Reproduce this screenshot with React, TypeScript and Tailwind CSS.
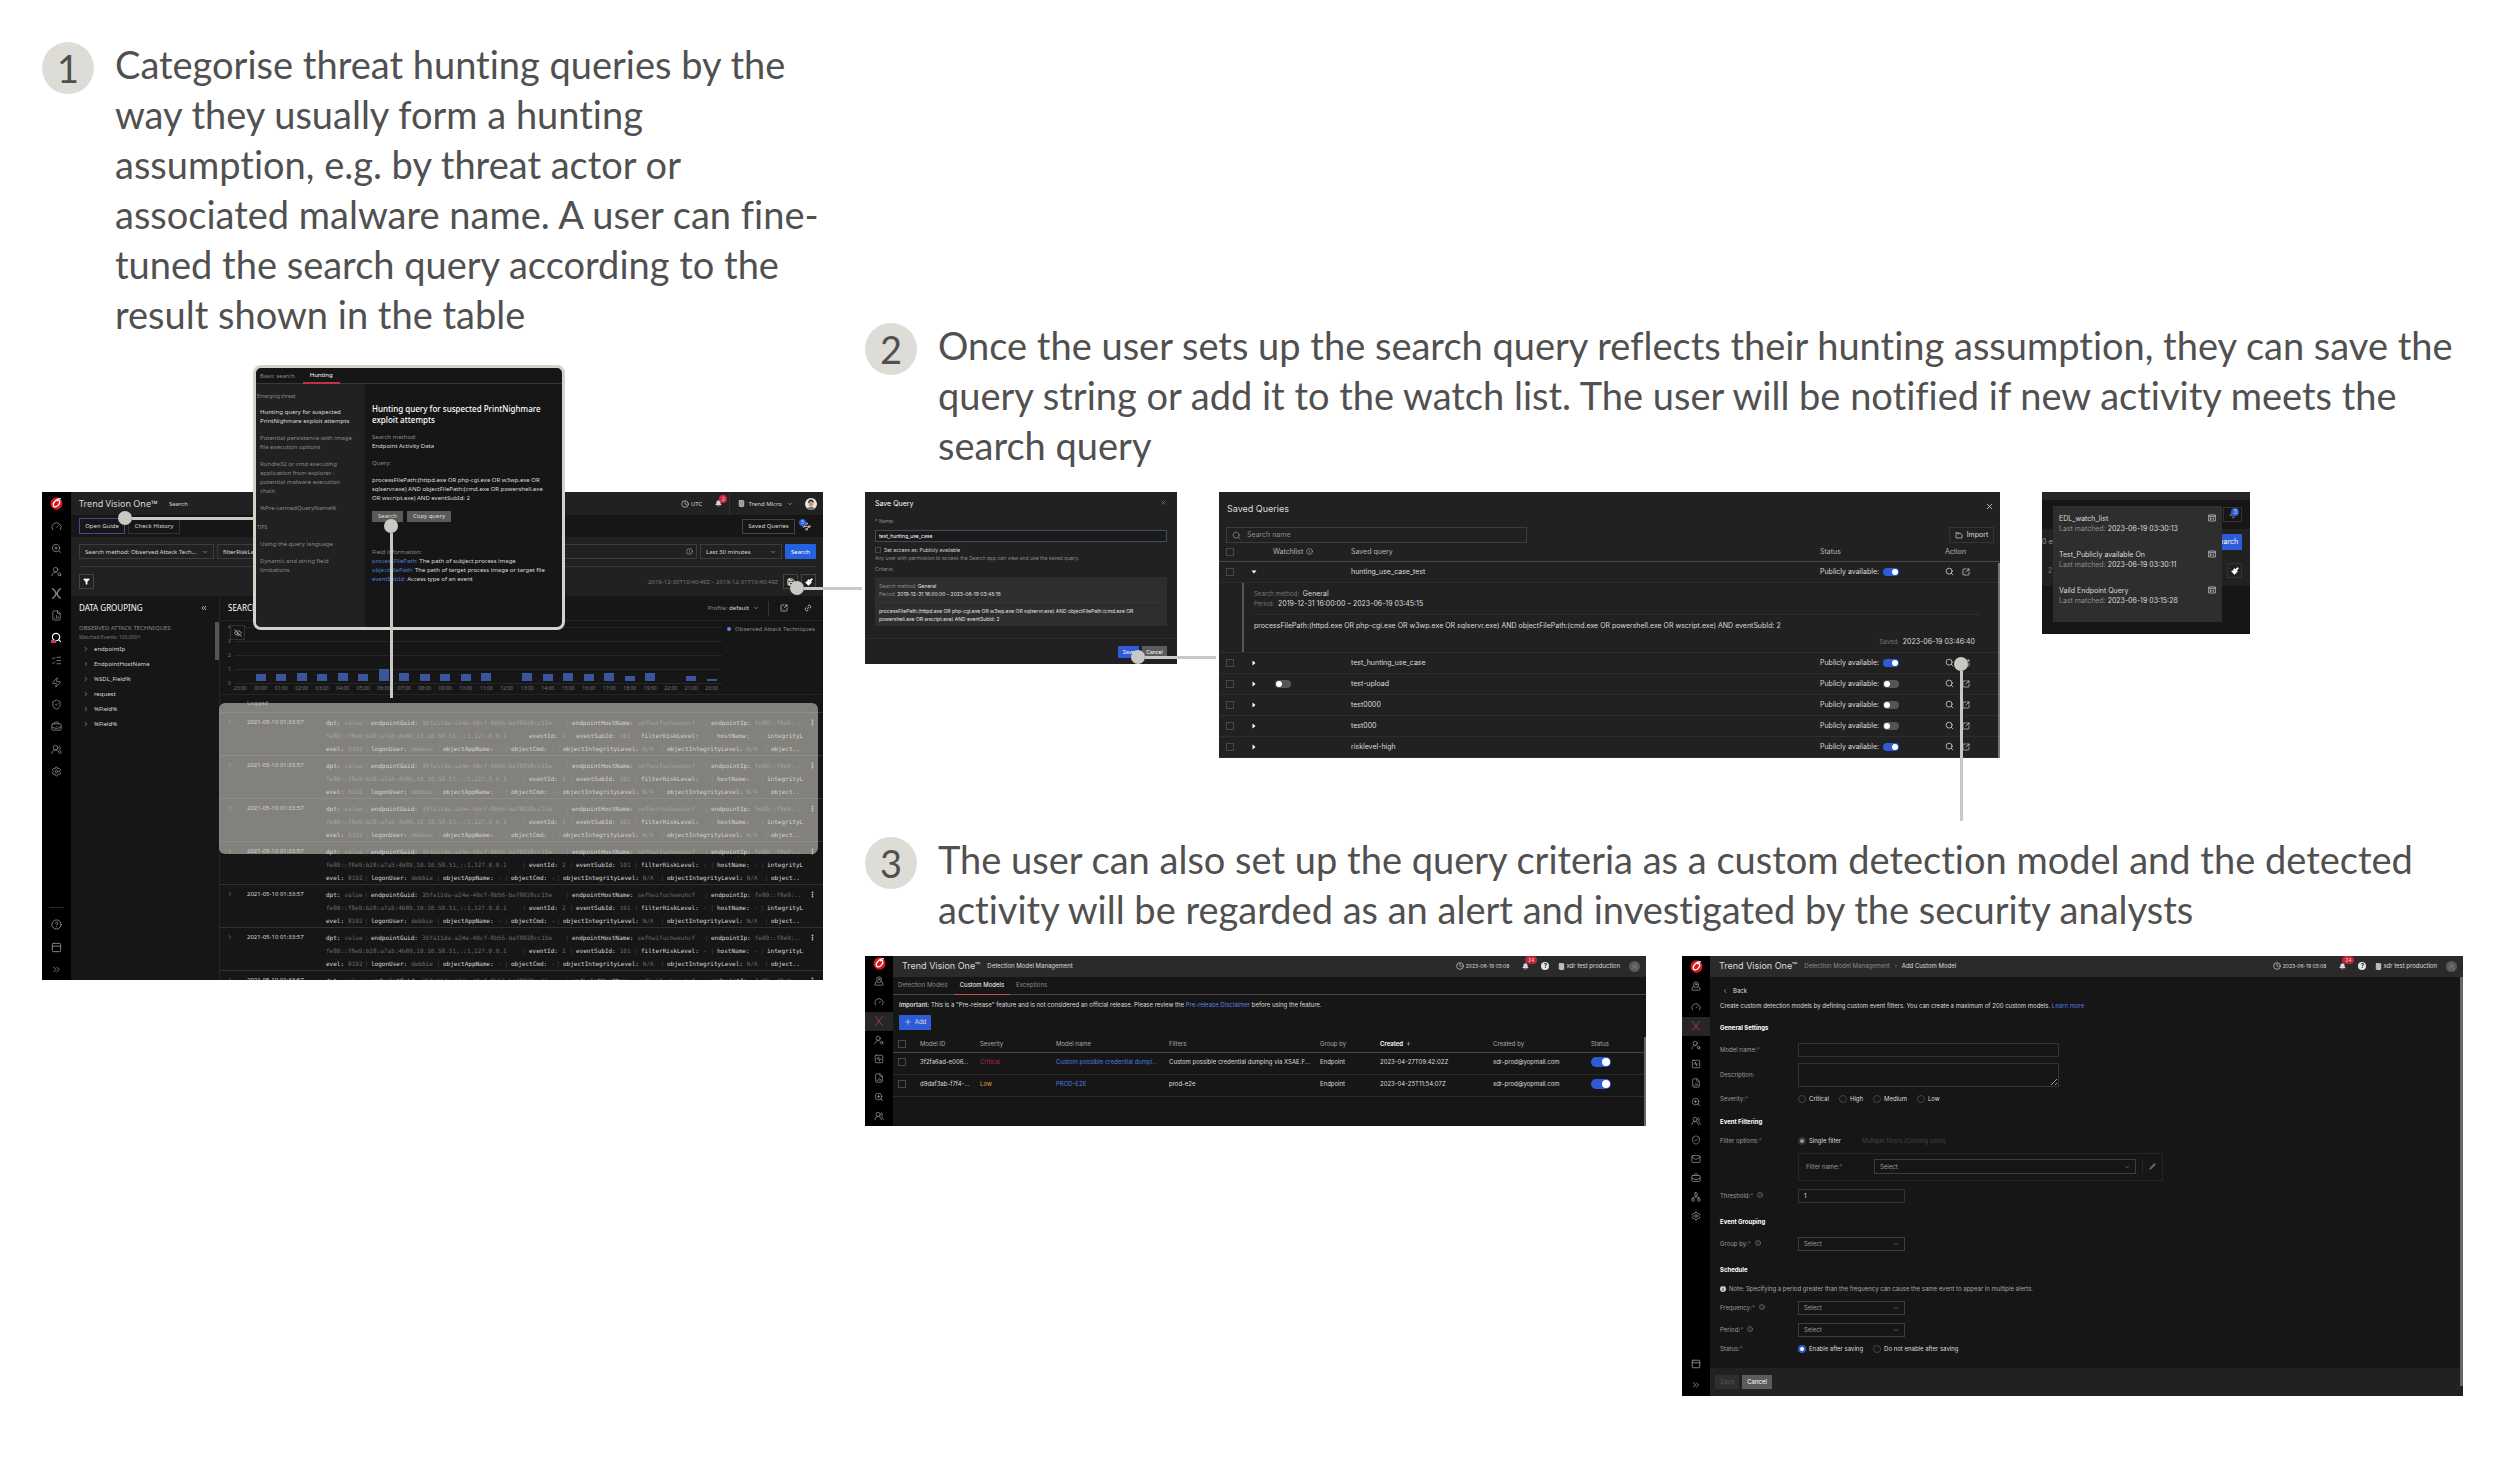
import type { ReactNode } from "react";
import {
  Activity,
  ArrowDown,
  Bell,
  BriefcaseBusiness,
  Building,
  ChevronDown,
  ChevronLeft,
  ChevronRight,
  ChevronsLeft,
  ChevronsRight,
  CircleHelp,
  Clock,
  EllipsisVertical,
  EyeOff,
  FileChartColumn,
  Funnel,
  Gauge,
  Info,
  Link2,
  ListChecks,
  Mail,
  MapPinned,
  Network,
  PanelTop,
  Paintbrush,
  Pencil,
  Plus,
  Save,
  Search,
  Settings,
  ShieldCheck,
  SquareArrowOutUpRight,
  SquareActivity,
  UserRound,
  UserRoundSearch,
  UsersRound,
  Waypoints,
  X,
  Zap,
  ZoomIn,
} from "lucide-react";

const noto = "font-['Noto_Sans',sans-serif]";
const inter = "font-[Inter,sans-serif]";

function Logo() {
  return (
    <svg viewBox="0 0 24 24" className="size-[13px]" aria-label="Trend Micro">
      <ellipse cx="12" cy="12" rx="11" ry="11.5" fill="#d71920" />
      <path
        d="M19 3C13 3 5.500 9 6 15c.3 3.500 4 4 7 2 3.500-2.300 5.500-6.500 4.500-9.500-.6-1.800-2.600-1.600-4-.6"
        fill="none"
        stroke="#fff"
        strokeWidth="2.400"
        strokeLinecap="round"
      />
    </svg>
  );
}

/* XDR mark, two chevrons that meet in the middle */
function Xdr({ className, strokeWidth = 2 }: { className?: string; strokeWidth?: number }) {
  return (
    <svg
      viewBox="0 0 24 24"
      className={className}
      fill="none"
      stroke="currentColor"
      strokeWidth={strokeWidth}
      strokeLinecap="round"
    >
      <path d="M3 2c3 0 4 2 5.500 4.500L11 12l-2.500 5.500C7 20 6 22 3 22M21 2c-3 0-4 2-5.500 4.500L13 12l2.500 5.500C17 20 18 22 21 22" />
    </svg>
  );
}

/* Tray with an arrow that bends into it */
function ImportIcon() {
  return (
    <svg viewBox="0 0 24 24" className="size-[8px]" fill="none" stroke="currentColor" strokeWidth="2">
      <path d="M6 4H3v17h18V10M8 7h7c3 0 4 2 4 4M11 3L7 7l4 4" />
    </svg>
  );
}

/* Numbered step heading */
function Step({ number, children }: { number: number; children: ReactNode }) {
  return (
    <div className="flex items-start gap-[21px] font-[Lato,sans-serif] text-[#505050] [font-variant-ligatures:none]">
      <span className="mt-[3px] flex size-[52px] shrink-0 items-center justify-center rounded-full bg-[#dddcd7] text-[38px] leading-[52px]">
        {number}
      </span>
      <p className="text-[38px] leading-[50px]">{children}</p>
    </div>
  );
}

function Dot() {
  return <span className="size-[14px] shrink-0 rounded-full bg-[#c9c8c2]" />;
}

function Switch({ on, label, large }: { on?: boolean; label: string; large?: boolean }) {
  return (
    <input
      type="checkbox"
      role="switch"
      aria-label={label}
      defaultChecked={on}
      className={
        large
          ? "relative h-[10px] w-[20px] shrink-0 appearance-none rounded-full bg-[#555] align-middle before:absolute before:top-px before:left-px before:size-[8px] before:rounded-full before:bg-white checked:bg-[#2f5bd7] checked:before:left-[11px]"
          : "relative h-[8px] w-[16px] shrink-0 appearance-none rounded-full bg-[#555] align-middle before:absolute before:top-px before:left-px before:size-[6px] before:rounded-full before:bg-white checked:bg-[#2f5bd7] checked:before:left-[9px]"
      }
    />
  );
}

function Check({ label }: { label: string }) {
  return (
    <input
      type="checkbox"
      aria-label={label}
      className="block size-[8px] shrink-0 appearance-none border border-[#484848]"
    />
  );
}

function Dropdown({ label, value, className }: { label: string; value: string; className: string }) {
  return (
    <div className={`relative ${className}`}>
      <select
        aria-label={label}
        className="block h-full w-full appearance-none border border-[#3d3d3d] bg-transparent px-[5px] text-inherit"
      >
        <option>{value}</option>
      </select>
      <ChevronDown className="absolute top-1/2 right-[6px] size-[6px] -translate-y-1/2" />
    </div>
  );
}

const mainRail = [
  Gauge,
  ZoomIn,
  UserRoundSearch,
  Xdr,
  FileChartColumn,
  Activity,
  ListChecks,
  Zap,
  ShieldCheck,
  BriefcaseBusiness,
  UsersRound,
  Settings,
];

const modelRail = [
  MapPinned,
  Gauge,
  Xdr,
  UserRoundSearch,
  SquareActivity,
  FileChartColumn,
  ZoomIn,
  UsersRound,
  ShieldCheck,
  Mail,
  BriefcaseBusiness,
  Network,
  Settings,
];

const groups = ["endpointIp", "EndpointHostName", "%SDL_Field%", "request", "%Field%", "%Field%"];

const bars = [
  { hour: "23:00", size: 0 },
  { hour: "00:00", size: 7 },
  { hour: "01:00", size: 7 },
  { hour: "02:00", size: 8 },
  { hour: "03:00", size: 7 },
  { hour: "04:00", size: 8 },
  { hour: "05:00", size: 7 },
  { hour: "06:00", size: 12 },
  { hour: "07:00", size: 8 },
  { hour: "08:00", size: 7 },
  { hour: "09:00", size: 7 },
  { hour: "10:00", size: 7 },
  { hour: "11:00", size: 8 },
  { hour: "12:00", size: 0 },
  { hour: "13:00", size: 8 },
  { hour: "14:00", size: 7 },
  { hour: "15:00", size: 8 },
  { hour: "16:00", size: 7 },
  { hour: "17:00", size: 8 },
  { hour: "18:00", size: 5 },
  { hour: "19:00", size: 8 },
  { hour: "22:00", size: 0 },
  { hour: "21:00", size: 5 },
  { hour: "20:00", size: 2 },
];

const eventLines = [
  [
    { name: "dpt:", value: "value", width: "w-[45px]" },
    { name: "endpointGuid:", value: "35fa11da-a24e-40cf-8b56-baf8828cc15e", width: "w-[201px]" },
    { name: "endpointHostName:", value: "sefhwifuchweuhcf", width: "w-[139px]" },
    { name: "endpointIp:", value: "fe80::f8e9:..", width: "w-[92px]" },
  ],
  [
    { name: "", value: "fe80::f8e9:b28:a7a5:4b89,10.10.58.51,::1,127.0.0.1", width: "w-[203px]" },
    { name: "eventId:", value: "2", width: "w-[47px]" },
    { name: "eventSubId:", value: "101", width: "w-[65px]" },
    { name: "filterRiskLevel:", value: "-", width: "w-[76px]" },
    { name: "hostName:", value: "-", width: "w-[50px]" },
    { name: "integrityL", value: "", width: "w-[38px]" },
  ],
  [
    { name: "evel:", value: "8192", width: "w-[45px]" },
    { name: "logonUser:", value: "debbie", width: "w-[72px]" },
    { name: "objectAppName:", value: "-", width: "w-[68px]" },
    { name: "objectCmd:", value: "-", width: "w-[52px]" },
    { name: "objectIntegrityLevel:", value: "N/A", width: "w-[104px]" },
    { name: "objectIntegrityLevel:", value: "N/A", width: "w-[104px]" },
    { name: "object..", value: "", width: "w-[32px]" },
  ],
];

function EventRow() {
  return (
    <tr className="border-t border-[#303030] align-top">
      <td className="w-[27px] pt-[6px] pl-[7px]">
        <ChevronRight className="size-[6px] text-[#aaa]" />
      </td>
      <td className="w-[79px] pt-[3px] leading-[13px]">2021-05-10 01:33:57</td>
      <td className="pt-[3px] font-['DejaVu_Sans_Mono',monospace]">
        {eventLines.map((line, i) => (
          <div key={i} className="flex h-[13px] leading-[13px] whitespace-nowrap">
            {line.map((item, j) => (
              <span key={j} className={`flex shrink-0 ${item.width}`}>
                {item.name && <span className="pr-[4px]">{item.name}</span>}
                <span className="text-[#6c6c6c]">{item.value}</span>
                {j < line.length - 1 && <span className="ml-auto pr-[3px] text-[#444]">|</span>}
              </span>
            ))}
          </div>
        ))}
      </td>
      <td className="w-[14px] pt-[6px]">
        <EllipsisVertical className="size-[7px]" strokeWidth={4} />
      </td>
    </tr>
  );
}

function SearchApp() {
  return (
    <div className={`flex h-[488px] overflow-hidden bg-[#161616] text-[6px] leading-[10px] text-[#d8d8d8] ${noto}`}>
      <nav className="flex w-[29px] shrink-0 flex-col items-center bg-black text-[#8c8c8c]">
        <div className="flex h-[23px] items-center">
          <Logo />
        </div>
        <div className="mt-[6px] flex h-[256px] flex-col justify-between">
          {mainRail.map((Icon, i) =>
            i === 5 ? (
              <span key={i} className="relative">
                <Search className="size-[11px] text-white" strokeWidth={2.5} />
                <span className="absolute bottom-0 left-0 h-[3px] w-[5px] bg-[#c4415a]" />
              </span>
            ) : (
              <Icon key={i} className="size-[11px]" strokeWidth={i === 3 ? 3 : 1.75} />
            ),
          )}
        </div>
        <div className="mt-auto flex h-[73px] w-[15px] flex-col items-center justify-between border-t border-[#2c2c2c] pt-[11px] pb-[5px]">
          <CircleHelp className="size-[11px]" />
          <PanelTop className="size-[11px]" />
          <ChevronsRight className="size-[11px]" />
        </div>
      </nav>

      <div className="flex min-w-0 flex-1 flex-col">
        <header className="flex h-[23px] shrink-0 items-center bg-[#212121] pr-[6px] pl-[8px]">
          <h2 className="text-[9px]">Trend Vision One™</h2>
          <span className="ml-[11px]">Search</span>
          <span className="ml-auto flex items-center gap-[2px]">
            <Clock className="size-[8px]" />
            UTC
          </span>
          <span className="relative mr-[7px] ml-[13px]">
            <Bell className="size-[7px] fill-current" />
            <span className="absolute -top-[5px] left-[4px] size-[8px] rounded-full bg-[#d9293f] text-center text-[5px] leading-[8px]">
              2
            </span>
          </span>
          <span className="flex h-full items-center gap-[3px] border-l border-[#303030] pl-[8px]">
            <Building className="size-[7px]" fill="#999" />
            Trend Micro
            <ChevronDown className="ml-[2px] size-[6px]" />
          </span>
          <svg viewBox="0 0 24 24" className="ml-[12px] size-[12px]" aria-label="Account">
            <circle cx="12" cy="12" r="12" fill="#e8e4df" />
            <path d="M6 11c0-6 3-8 6-8s6 2 6 8l-2-3H9z" fill="#2d2622" />
            <ellipse cx="12" cy="12" rx="4.500" ry="5.500" fill="#c99b7d" />
            <path d="M4 21c2-4 14-4 16 0-4 4-12 4-16 0z" fill="#777" />
          </svg>
        </header>

        <div className="flex h-[22px] shrink-0 items-center gap-[3px] pr-[12px] pl-[8px]">
          <button className="h-[16px] w-[46px] border border-[#4a4690]">Open Guide</button>
          <button className="h-[16px] w-[52px] border border-[#333]">Check History</button>
          <button className="ml-auto h-[15px] w-[53px] border border-[#444]">Saved Queries</button>
          <span className="relative ml-[4px]">
            <Waypoints className="size-[9px]" />
            <span className="absolute -top-[3px] -left-[3px] size-[7px] rounded-full bg-[#2562e0] text-center text-[5px] leading-[7px]">
              5
            </span>
          </span>
        </div>

        <div className="h-[59px] shrink-0 bg-[#212121] pt-[7px] pr-[7px] pl-[8px]">
          <form className="flex h-[15px] gap-[3px]">
            <Dropdown label="Search method" value="Search method: Observed Attack Tech..." className="w-[135px]" />
            <div className="relative flex-1">
              <input
                aria-label="Query"
                defaultValue="filterRiskLevel:"
                className="block h-full w-full border border-[#3d3d3d] px-[5px]"
              />
              <Info className="absolute top-[4px] right-[4px] size-[7px] text-[#aaa]" />
            </div>
            <Dropdown label="Time range" value="Last 30 minutes" className="w-[82px]" />
            <button type="button" className="w-[31px] bg-[#2562e0] text-white">
              Search
            </button>
          </form>
          <div className="mt-[7px] flex h-[23px] items-end gap-[3px] border-t border-[#383838]">
            <button aria-label="Filter" className="flex size-[15px] items-center justify-center border border-[#444]">
              <Funnel className="size-[7px] fill-white text-white" />
            </button>
            <span className="ml-auto pr-[2px] pb-[2px] text-[#777]">2019-12-30T10:40:49Z – 2019-12-31T10:40:49Z</span>
            <button aria-label="Save query" className="flex size-[15px] items-center justify-center border border-[#444]">
              <Save className="size-[8px] text-white" strokeWidth={3} />
            </button>
            <button aria-label="Clear" className="flex size-[15px] items-center justify-center border border-[#444]">
              <Paintbrush className="size-[8px] fill-white text-white" />
            </button>
          </div>
        </div>

        <div className="flex min-h-0 flex-1">
          <aside className="relative w-[149px] shrink-0 border-r border-[#262626] pl-[8px]">
            <div className="flex h-[24px] items-center justify-between pr-[11px] text-[8px] text-white">
              <h3>DATA GROUPING</h3>
              <ChevronsLeft className="size-[8px]" />
            </div>
            <p className="mt-[3px] leading-[10px] text-[#8a8a8a]">OBSERVED ATTACK TECHNIQUES</p>
            <p className="text-[5px] leading-[8px] text-[#777]">Matched Events: 100,000+</p>
            <ul className="pl-[4px]">
              {groups.map((group, i) => (
                <li key={i} className="flex h-[15px] items-center gap-[5px]">
                  <ChevronRight className="size-[6px]" />
                  {group}
                </li>
              ))}
            </ul>
            <span className="absolute top-[26px] right-0 h-[38px] w-[4px] bg-[#555]" />
          </aside>

          <section className="flex min-w-0 flex-1 flex-col">
            <div className="flex h-[24px] shrink-0 items-center pr-[11px] pl-[8px]">
              <h3 className="text-[8px] text-white">SEARCH RESULTS</h3>
              <span className="ml-auto text-[#8a8a8a]">
                Profile: <span className="text-[#d8d8d8]">default</span>
              </span>
              <ChevronDown className="ml-[4px] size-[6px]" />
              <span className="mx-[9px] h-[15px] border-l border-[#333]" />
              <SquareArrowOutUpRight className="mx-[2px] size-[8px]" />
              <Link2 className="ml-[14px] size-[8px] -rotate-45" />
            </div>

            {/* Histogram of matched events */}
            <div className="flex h-[75px] shrink-0 border-t border-b border-[#242424]">
              <div className="relative w-[502px] shrink-0 pl-[10px]">
                <div className="absolute inset-x-0 top-[2px] flex flex-col pl-[8px] text-[5px] text-[#777]">
                  {[4, 3, 2, 1, 0].map((tick) => (
                    <div key={tick} className="flex h-[14px] items-start gap-[4px] leading-[8px]">
                      {tick}
                      <span className="mt-[4px] flex-1 border-t border-[#262626]" />
                    </div>
                  ))}
                </div>
                <button
                  aria-label="Hide chart"
                  className="absolute top-[4px] left-[10px] flex size-[15px] items-center justify-center border border-[#333] bg-[#161616]"
                >
                  <EyeOff className="size-[8px]" />
                </button>
                <div className="relative flex pt-[43px] text-center text-[5px] text-[#777]">
                  {bars.map((bar) => (
                    <div key={bar.hour} className="flex-1">
                      <div className="flex h-[17px] items-end justify-center">
                        <span className="w-[10px] bg-[#3a559c]" style={{ height: bar.size }} />
                      </div>
                      <span className="block pt-[2px]">{bar.hour}</span>
                    </div>
                  ))}
                </div>
              </div>
              <p className="flex h-[16px] items-center gap-[4px] pl-[5px] whitespace-nowrap text-[#8a8a8a]">
                <span className="size-[4px] rounded-full bg-[#6c7ff2]" />
                Observed Attack Techniques
              </p>
            </div>

            <table className="w-full table-fixed border-collapse text-left">
              <thead>
                <tr className="h-[17px] text-[#9a9a9a]">
                  <th className="w-[27px]" />
                  <th className="w-[79px] font-normal">Logged</th>
                  <th />
                  <th className="w-[14px]" />
                </tr>
              </thead>
              <tbody>
                {[0, 1, 2, 3, 4, 5, 6].map((row) => (
                  <EventRow key={row} />
                ))}
              </tbody>
            </table>
          </section>
        </div>
      </div>
    </div>
  );
}

/* Hunting guide that opens over the search app */
function HuntingGuide() {
  return (
    <div
      className={`absolute -top-[127px] left-[211px] flex h-[265px] w-[312px] flex-col overflow-hidden rounded-[8px] border-3 border-[#d3d3ca] bg-[#161616] text-[6px] leading-[9px] text-[#8a8a8a] ${noto}`}
    >
      <div className="flex h-[16px] shrink-0 border-b border-[#383838] pl-[4px]">
        <button className="h-[16px] pr-[8px]">Basic search</button>
        <button className="h-[16px] border-b-2 border-[#c2333f] px-[7px] text-white">Hunting</button>
      </div>
      <div className="flex flex-1">
        <div className="w-[109px] bg-[#212121] pt-[8px] pl-[4px]">
          <p className="-ml-[3px] text-[5px]">Emerging threat</p>
          <p className="mt-[7px] text-[#dcdcdc]">
            Hunting query for suspected
            <br />
            PrintNighmare exploit attempts
          </p>
          <p className="mt-[8px]">
            Potential persistence with image
            <br />
            file execution options
          </p>
          <p className="mt-[8px]">
            Rundle32 or cmd executing
            <br />
            application from explorer -
            <br />
            potential malware execution
            <br />
            chain
          </p>
          <p className="mt-[8px]">%Pre-cannedQueryName%</p>
          <p className="mt-[10px] -ml-[3px] text-[5px]">TIPS</p>
          <p className="mt-[8px]">Using the query language</p>
          <p className="mt-[8px]">
            Dynamic and string field
            <br />
            limitations
          </p>
        </div>
        <div className="flex-1 pt-[19px] pl-[7px] whitespace-nowrap">
          <h3 className="text-[8px] leading-[11px] font-medium text-white">
            Hunting query for suspected PrintNighmare
            <br />
            exploit attempts
          </h3>
          <p className="mt-[8px]">Search method:</p>
          <p className="text-[#dcdcdc]">Endpoint Activity Data</p>
          <p className="mt-[8px]">Query:</p>
          <p className="mt-[8px] text-[#dcdcdc]">
            processFilePath:(httpd.exe OR php-cgi.exe OR w3wp.exe OR
            <br />
            sqlservr.exe) AND objectFilePath:(cmd.exe OR powershell.exe
            <br />
            OR wscript.exe) AND eventSubId: 2
          </p>
          <div className="mt-[8px] flex gap-[4px] text-[#dcdcdc]">
            <button className="h-[11px] w-[31px] bg-[#5a5a5a]">Search</button>
            <button className="h-[11px] w-[44px] bg-[#5a5a5a]">Copy query</button>
          </div>
          <p className="mt-[26px]">Field information:</p>
          <p className="text-[#dcdcdc]">
            <span className="text-[#4f7bd6]">processFilePath:</span> The path of subject process image
          </p>
          <p className="text-[#dcdcdc]">
            <span className="text-[#4f7bd6]">objectFilePath:</span> The path of target process image or target file
          </p>
          <p className="text-[#dcdcdc]">
            <span className="text-[#4f7bd6]">eventSubId:</span> Access type of an event
          </p>
        </div>
      </div>
    </div>
  );
}

function SaveQuery() {
  return (
    <div className={`relative bg-[#212121] px-[10px] pt-[7px] pb-[6px] text-[5px] leading-[8px] text-[#8a8a8a] ${inter}`}>
      <div className="flex items-start justify-between">
        <h3 className="text-[7px] leading-[10px] text-white">Save Query</h3>
        <button aria-label="Close">
          <X className="size-[7px]" />
        </button>
      </div>
      <label htmlFor="query-name" className="mt-[8px] block">
        * Name:
      </label>
      <input
        id="query-name"
        defaultValue="test_hunting_use_case"
        className="mt-[5px] block h-[12px] w-full border border-[#3f4e5a] bg-[#1a1a1a] px-[3px] text-white"
      />
      <label className="mt-[4px] flex items-center gap-[3px] text-[#dcdcdc]">
        <input type="checkbox" className="size-[6px] appearance-none border border-[#484848]" />
        Set access as: Publicly available
      </label>
      <p className="whitespace-nowrap">Any user with permission to access the Search app can view and use the saved query.</p>
      <p className="mt-[3px]">Criteria:</p>
      <div className="mt-[4px] h-[49px] bg-[#2e2e2e] px-[4px] pt-[5px]">
        <p>
          Search method: <span className="text-[#e4e4e4]">General</span>
        </p>
        <p>
          Period: <span className="text-[#e4e4e4]">2019-12-31 16:00:00 – 2023-06-19 03:45:15</span>
        </p>
        <p className="mt-[4px] border-t border-[#363636] pt-[4px] whitespace-nowrap text-[#e4e4e4]">
          processFilePath:(httpd.exe OR php-cgi.exe OR w3wp.exe OR sqlservr.exe) AND objectFilePath:(cmd.exe OR
          <br />
          powershell.exe OR wscript.exe) AND eventSubId: 2
        </p>
      </div>
      <div className="-mx-[10px] mt-[12px] flex justify-end gap-[3px] border-t border-[#2b2b2b] px-[10px] pt-[7px] text-white">
        <button className="h-[12px] w-[21px] bg-[#2f5bd7]">Save</button>
        <button className="h-[12px] w-[25px] bg-[#5c5c5c]">Cancel</button>
      </div>
      <div className="absolute -right-[39px] bottom-0 flex w-[85px] items-center">
        <Dot />
        <span className="h-[3px] flex-1 bg-[#c9c8c2]" />
      </div>
    </div>
  );
}

type Query = { name: string; open?: boolean; watched?: boolean; published?: boolean };

const queries: Query[] = [
  { name: "hunting_use_case_test", open: true, published: true },
  { name: "test_hunting_use_case", published: true },
  { name: "test-upload", watched: true },
  { name: "test0000" },
  { name: "test000" },
  { name: "risklevel-high", published: true },
];

function QueryRow({ query }: { query: Query }) {
  return (
    <tr className="h-[21px] border-b border-[#2d2d2d]">
      <td className="pl-[7px]">
        <Check label={`Select ${query.name}`} />
      </td>
      <td>
        <button aria-label="Toggle details" className="block">
          <svg viewBox="0 0 6 6" className="size-[6px] fill-white">
            <path d={query.open ? "M.5 1.500h5L3 4.500z" : "M1.500 .5v5L4.500 3z"} />
          </svg>
        </button>
      </td>
      <td className="pl-[2px]">{query.watched && <Switch label="Watch" />}</td>
      <td>{query.name}</td>
      <td>
        <span className="flex items-center gap-[4px]">
          Publicly available: <Switch on={query.published} label={`Publish ${query.name}`} />
        </span>
      </td>
      <td>
        <span className="flex gap-[8px]">
          <button aria-label="Run">
            <Search className="size-[9px]" />
          </button>
          <button aria-label="Open">
            <SquareArrowOutUpRight className="size-[8px]" />
          </button>
        </span>
      </td>
    </tr>
  );
}

function SavedQueries() {
  return (
    <div className={`relative bg-[#212121] pt-[11px] text-[7px] leading-[10px] text-[#dcdcdc] ${inter}`}>
      <div className="flex h-[12px] items-center justify-between pr-[6px] pl-[8px]">
        <h3 className="text-[9px]">Saved Queries</h3>
        <button aria-label="Close" className="mb-[6px]">
          <X className="size-[9px]" />
        </button>
      </div>
      <div className="mt-[12px] flex h-[16px] justify-between pr-[6px] pl-[7px]">
        <label className="flex w-[301px] items-center gap-[6px] border border-[#3d3d3d] pl-[5px] text-[#8a8a8a]">
          <Search className="size-[9px]" />
          <input placeholder="Search name" className="min-w-0 flex-1 outline-none placeholder:text-[#8a8a8a]" />
        </label>
        <button className="flex w-[45px] items-center justify-center gap-[4px] border border-[#333]">
          <ImportIcon />
          Import
        </button>
      </div>
      <table className="w-full table-fixed border-collapse text-left">
        <thead>
          <tr className="h-[18px] border-b border-[#484848] text-[#b4b4b4]">
            <th className="w-[32px] pl-[7px]">
              <Check label="Select all" />
            </th>
            <th className="w-[22px]" />
            <th className="w-[78px] font-normal">
              <span className="flex items-center gap-[3px]">
                Watchlist <Info className="size-[7px]" />
              </span>
            </th>
            <th className="font-normal">Saved query</th>
            <th className="w-[125px] font-normal">Status</th>
            <th className="w-[55px] font-normal">Action</th>
          </tr>
        </thead>
        <tbody>
          <QueryRow query={queries[0]} />
          <tr className="border-b border-[#2d2d2d]">
            <td colSpan={6}>
              <div className="ml-[23px] h-[69px] border-l-2 border-[#555] pt-[6px] pr-[20px] pl-[10px] text-[#777]">
                <p>
                  <span className="text-[6px]">Search method:</span>{" "}
                  <span className="pl-[2px] text-[#dcdcdc]">General</span>
                </p>
                <p>
                  <span className="text-[6px]">Period:</span>{" "}
                  <span className="pl-[2px] text-[#dcdcdc]">2019-12-31 16:00:00 – 2023-06-19 03:45:15</span>
                </p>
                <p className="mt-[5px] border-t border-[#2d2d2d] pt-[6px] text-[#dcdcdc]">
                  processFilePath:(httpd.exe OR php-cgi.exe OR w3wp.exe OR sqlservr.exe) AND objectFilePath:(cmd.exe OR
                  powershell.exe OR wscript.exe) AND eventSubId: 2
                </p>
                <p className="mt-[6px] pr-[5px] text-right">
                  <span className="text-[6px]">Saved:</span>{" "}
                  <span className="pl-[2px] text-[#dcdcdc]">2023-06-19 03:46:40</span>
                </p>
              </div>
            </td>
          </tr>
          {queries.slice(1).map((query) => (
            <QueryRow key={query.name} query={query} />
          ))}
        </tbody>
      </table>
      <span className="absolute top-[71px] right-0 bottom-0 w-[2px] bg-[#777]" />
      <div className="absolute top-[165px] right-[32px] flex h-[164px] flex-col items-center">
        <Dot />
        <span className="w-[3px] flex-1 bg-[#c9c8c2]" />
      </div>
    </div>
  );
}

const matches = [
  { name: "EDL_watch_list", time: "2023-06-19 03:30:13" },
  { name: "Test_Publicly available On", time: "2023-06-19 03:30:11" },
  { name: "Vaild Endpoint Query", time: "2023-06-19 03:15:28" },
];

function Watchlist() {
  return (
    <div className={`relative bg-[#161616] pb-[48px] text-[7px] leading-[10px] text-[#dcdcdc] ${inter}`}>
      <div className="h-[8px] bg-[#262626]" />
      <div className="flex h-[29px] items-center justify-end pr-[8px]">
        <span className="relative flex h-[15px] w-[19px] items-center justify-center border border-[#333]">
          <Waypoints className="size-[8px] text-[#777]" />
          <span className="absolute top-0 right-[2px] size-[8px] rounded-full bg-[#2f5bd7] text-center text-[6px] leading-[8px]">
            3
          </span>
        </span>
      </div>
      <div className="h-[57px] bg-[#212121] pt-[5px] pr-[8px]">
        <div className="flex h-[16px] items-center justify-between text-[#999]">
          0 ev
          <button className="h-[16px] w-[31px] bg-[#2f5bd7] text-white">Search</button>
        </div>
        <div className="mt-[13px] flex h-[15px] items-center justify-between pl-[6px] text-[#777]">
          2
          <button aria-label="Clear" className="flex size-[15px] items-center justify-center border border-[#333]">
            <Paintbrush className="size-[8px] fill-white text-white" />
          </button>
        </div>
      </div>
      <ul className="absolute top-[14px] left-[11px] h-[116px] w-[169px] bg-[#2e2e2e] px-[6px] pt-[8px]">
        {matches.map((match) => (
          <li key={match.name} className="flex h-[36px] items-start justify-between">
            <div>
              <p>{match.name}</p>
              <p>
                <span className="text-[#8f8f8f]">Last matched:</span> {match.time}
              </p>
            </div>
            <svg viewBox="0 0 24 24" className="size-[8px]" fill="none" stroke="currentColor" strokeWidth="2">
              <path d="M2 3h20v18H2zM2 7h20" />
              <path d="M7 11v6l4-3zM14 12h4M14 16h4" />
            </svg>
          </li>
        ))}
      </ul>
    </div>
  );
}

/* Rail and top bar shared by the detection model pages */
function ModelShell({ crumbs, rail, className = "", children }: {
  crumbs: ReactNode;
  rail: ReactNode;
  className?: string;
  children: ReactNode;
}) {
  return (
    <div className={`relative flex bg-[#161616] text-[6px] leading-[10px] text-[#dcdcdc] ${inter} ${className}`}>
      <nav className="flex w-[28px] shrink-0 flex-col items-center bg-black text-[#9a9a9a]">
        <div className="flex h-[21px] items-center">
          <Logo />
        </div>
        {rail}
      </nav>
      <div className="flex min-w-0 flex-1 flex-col">
        <header className="flex h-[21px] shrink-0 items-center bg-[#2a2a2a] pr-[6px] pl-[9px]">
          <h2 className="text-[9px]">Trend Vision One™</h2>
          <span className="ml-[7px] flex items-center gap-[4px]">{crumbs}</span>
          <span className="ml-auto flex items-center gap-[2px] text-[5px]">
            <Clock className="size-[8px]" />
            2023-06-19 03:08
          </span>
          <span className="relative mr-[12px] ml-[13px]">
            <Bell className="size-[7px] fill-current" />
            <span className="absolute -top-[7px] left-[3px] h-[8px] w-[12px] rounded-full bg-[#c22537] text-center text-[5px] leading-[8px]">
              24
            </span>
          </span>
          <span className="size-[8px] rounded-full bg-[#e6e6e6] text-center text-[6px] leading-[8px] font-bold text-[#222]">
            ?
          </span>
          <span className="ml-[9px] flex items-center gap-[1px]">
            <Building className="size-[7px]" fill="#bbb" />
            xdr test production
          </span>
          <span className="ml-[9px] flex size-[11px] items-center justify-center rounded-full bg-[#5a5a5a] text-[#888]">
            <UserRound className="size-[7px]" />
          </span>
        </header>
        {children}
      </div>
    </div>
  );
}

function RailIcons({ icons }: { icons: typeof modelRail }) {
  return (
    <div className="w-full">
      {icons.map((Icon, i) => (
        <span
          key={i}
          className={
            i === 2
              ? "flex h-[19px] items-center justify-center bg-[#262626] text-[#c4415a]"
              : "flex h-[19px] items-center justify-center first:mb-[2px]"
          }
        >
          <Icon className="size-[10px]" strokeWidth={1.75} />
        </span>
      ))}
    </div>
  );
}

const models = [
  {
    id: "3f2fa6ad-e006...",
    severity: "Critical",
    tone: "text-[#b5204c]",
    name: "Custom possible credential dumpi...",
    filters: "Custom possible credential dumping via XSAE.F...",
    created: "2023-04-27T09:42:02Z",
  },
  {
    id: "d9daf3ab-f7f4-...",
    severity: "Low",
    tone: "text-[#e0a030]",
    name: "PROD-E2E",
    filters: "prod-e2e",
    created: "2023-04-25T11:54:07Z",
  },
];

function ModelList() {
  return (
    <ModelShell
      className="h-[170px] overflow-hidden"
      crumbs="Detection Model Management"
      rail={<RailIcons icons={modelRail.slice(0, 8)} />}
    >
      <div className="flex h-[18px] shrink-0 border-b border-[#484848] pl-[5px] text-[#8a8a8a]">
        <button>Detection Models</button>
        <button className="mx-[6px] h-[18px] border-b border-[#d04a55] px-[6px] text-white">Custom Models</button>
        <button>Exceptions</button>
      </div>
      <p className="mt-[5px] ml-[6px] whitespace-nowrap">
        <b className="font-semibold">Important:</b> This is a "Pre-release" feature and is not considered an official
        release. Please review the{" "}
        <a href="#disclaimer" className="text-[#5a83e0]">
          Pre-release Disclaimer
        </a>{" "}
        before using the feature.
      </p>
      <button className="mt-[5px] ml-[6px] flex h-[15px] w-[32px] items-center justify-center gap-[3px] bg-[#2f5bd7]">
        <Plus className="size-[8px]" />
        Add
      </button>
      <table className="mt-[6px] w-full table-fixed border-collapse text-left whitespace-nowrap">
        <thead>
          <tr className="h-[17px] border-b border-[#484848] text-[#a8a8a8] [&>th]:font-normal">
            <th className="w-[27px] pl-[5px]">
              <Check label="Select all" />
            </th>
            <th className="w-[60px]">Model ID</th>
            <th className="w-[76px]">Severity</th>
            <th className="w-[113px]">Model name</th>
            <th>Filters</th>
            <th className="w-[60px]">Group by</th>
            <th className="w-[113px] text-white">
              <span className="flex items-center gap-[3px] font-semibold">
                Created <ArrowDown className="size-[5px]" />
              </span>
            </th>
            <th className="w-[98px]">Created by</th>
            <th className="w-[55px]">Status</th>
          </tr>
        </thead>
        <tbody>
          {models.map((model) => (
            <tr key={model.id} className="h-[22px] border-b border-[#2a2a2a] [&>td]:pb-[4px]">
              <td className="pl-[5px]">
                <Check label={`Select ${model.id}`} />
              </td>
              <td>{model.id}</td>
              <td className={model.tone}>{model.severity}</td>
              <td>
                <a href="#model" className="text-[#4f7be0]">
                  {model.name}
                </a>
              </td>
              <td>{model.filters}</td>
              <td>Endpoint</td>
              <td>{model.created}</td>
              <td>xdr-prod@yopmail.com</td>
              <td>
                <Switch on large label={`Enable ${model.id}`} />
              </td>
            </tr>
          ))}
        </tbody>
      </table>
      <span className="absolute top-[81px] right-0 bottom-0 w-[2px] bg-[#666]" />
    </ModelShell>
  );
}

function Row({ label, info, htmlFor, className, children }: {
  label: string;
  info?: boolean;
  htmlFor?: string;
  className: string;
  children: ReactNode;
}) {
  return (
    <div className={`grid grid-cols-[78px_1fr] items-center ${className}`}>
      <label htmlFor={htmlFor} className="flex items-center text-[#9a9a9a]">
        {label}
        {label !== "Description:" && <span className="text-[#c4415a]">*</span>}
        {info && <Info className="mb-[2px] ml-[4px] size-[6px]" />}
      </label>
      {children}
    </div>
  );
}

function Radio({ name, label, checked }: { name: string; label: string; checked?: boolean }) {
  return (
    <label className="flex items-center gap-[3px]">
      <input
        type="radio"
        name={name}
        defaultChecked={checked}
        className="size-[8px] appearance-none rounded-full border border-[#444] checked:border-2 checked:border-[#2f5bd7] checked:bg-white"
      />
      {label}
    </label>
  );
}

function AddModel() {
  return (
    <ModelShell
      crumbs={
        <>
          <span className="text-[#8a8a8a]">Detection Model Management</span>
          <ChevronRight className="size-[4px]" />
          Add Custom Model
        </>
      }
      rail={
        <>
          <RailIcons icons={modelRail} />
          <div className="mt-auto flex flex-col gap-[11px] pb-[6px]">
            <PanelTop className="size-[10px]" />
            <ChevronsRight className="size-[10px]" />
          </div>
        </>
      }
    >
      <form className="pt-[9px] pl-[10px] whitespace-nowrap">
        <a href="#back" className="flex h-[10px] items-center gap-[5px] pl-[2px]">
          <ChevronLeft className="size-[6px]" />
          Back
        </a>
        <p className="mt-[5px]">
          Create custom detection models by defining custom event filters. You can create a maximum of 200 custom
          models.{" "}
          <a href="#learn" className="text-[#4f7be0]">
            Learn more
          </a>
        </p>

        <h3 className="mt-[12px] font-bold text-white">General Settings</h3>
        <Row label="Model name:" htmlFor="model-name" className="mt-[10px]">
          <input id="model-name" className="h-[14px] w-[261px] border border-[#333]" />
        </Row>
        <Row label="Description:" htmlFor="description" className="mt-[6px]">
          <textarea id="description" className="block h-[24px] w-[261px] border border-[#333]" />
        </Row>
        <Row label="Severity:" className="mt-[7px] h-[10px]">
          <div className="flex gap-[10px]">
            <Radio name="severity" label="Critical" />
            <Radio name="severity" label="High" />
            <Radio name="severity" label="Medium" />
            <Radio name="severity" label="Low" />
          </div>
        </Row>

        <h3 className="mt-[13px] font-bold text-white">Event Filtering</h3>
        <Row label="Filter options:" className="mt-[9px] h-[10px]">
          <div className="flex gap-[10px]">
            <label className="flex items-center gap-[3px]">
              <input
                type="radio"
                name="filter"
                defaultChecked
                className="size-[8px] appearance-none rounded-full border-2 border-[#333] bg-[#999]"
              />
              Single filter
            </label>
            <label className="flex items-center gap-[3px] text-[#444]">
              <input type="radio" name="filter" disabled className="size-[8px] appearance-none" />
              Multiple filters (Coming soon)
            </label>
          </div>
        </Row>
        <div className="mt-[7px] ml-[78px] flex h-[28px] w-[365px] items-center border border-[#262626] pl-[7px] text-[#9a9a9a]">
          <span className="w-[68px]">
            Filter name:<span className="text-[#c4415a]">*</span>
          </span>
          <Dropdown label="Filter name" value="Select" className="h-[15px] w-[262px]" />
          <span className="ml-[6px] h-[15px] border-l border-[#262626]" />
          <button type="button" aria-label="Edit filter" className="ml-[6px] text-[#666]">
            <Pencil className="size-[7px] fill-current" />
          </button>
        </div>
        <Row label="Threshold:" info htmlFor="threshold" className="mt-[8px]">
          <input id="threshold" defaultValue="1" className="h-[14px] w-[107px] border border-[#333] px-[5px]" />
        </Row>

        <h3 className="mt-[14px] font-bold text-white">Event Grouping</h3>
        <Row label="Group by:" info className="mt-[10px] text-[#9a9a9a]">
          <Dropdown label="Group by" value="Select" className="h-[14px] w-[107px]" />
        </Row>

        <h3 className="mt-[14px] font-bold text-white">Schedule</h3>
        <p className="mt-[9px] flex items-center gap-[3px] text-[#a8a8a8]">
          <span className="size-[6px] rounded-full bg-[#ccc] text-center text-[5px] leading-[6px] font-bold text-[#222]">
            i
          </span>
          Note: Specifying a period greater than the frequency can cause the same event to appear in multiple alerts.
        </p>
        <Row label="Frequency:" info className="mt-[7px] text-[#9a9a9a]">
          <Dropdown label="Frequency" value="Select" className="h-[14px] w-[107px]" />
        </Row>
        <Row label="Period:" info className="mt-[8px] text-[#9a9a9a]">
          <Dropdown label="Period" value="Select" className="h-[14px] w-[107px]" />
        </Row>
        <Row label="Status:" className="mt-[7px] h-[10px]">
          <div className="flex gap-[10px]">
            <Radio name="status" label="Enable after saving" checked />
            <Radio name="status" label="Do not enable after saving" />
          </div>
        </Row>
      </form>
      <footer className="mt-[14px] flex h-[28px] items-center gap-[3px] bg-[#212121] pl-[5px]">
        <button disabled className="h-[14px] w-[24px] bg-[#2e2e2e] text-[#555]">
          Save
        </button>
        <button className="h-[14px] w-[30px] bg-[#5c5c5c] text-white">Cancel</button>
      </footer>
      <span className="absolute top-[21px] right-0 bottom-[10px] w-[3px] bg-[#666]" />
    </ModelShell>
  );
}

export default function App() {
  return (
    <main className="grid min-h-screen grid-cols-[781fr_1598fr] items-start gap-x-[42px] bg-white pt-[39px] pr-[37px] pb-[65px] pl-[42px]">
      <section>
        <Step number={1}>
          Categorise threat hunting queries by the
          <br />
          way they usually form a hunting
          <br />
          assumption, e.g. by threat actor or
          <br />
          associated malware name. A user can fine-
          <br />
          tuned the search query according to the
          <br />
          result shown in the table
        </Step>
        <div className="relative mt-[153px]">
          <SearchApp />
          <div className="absolute top-[19px] left-[76px] flex w-[135px] items-center">
            <Dot />
            <span className="h-[3px] flex-1 bg-[#c9c8c2]" />
          </div>
          <div className="absolute top-[211px] left-[177px] h-[151px] w-[599px] rounded-[6px] bg-[#d0cfc7]/58" />
          <HuntingGuide />
          <div className="absolute top-[27px] left-[342px] flex h-[179px] flex-col items-center">
            <Dot />
            <span className="w-[3px] flex-1 bg-[#c9c8c2]" />
          </div>
          <div className="absolute top-[89px] -right-[39px] flex w-[72px] items-center">
            <Dot />
            <span className="h-[3px] flex-1 bg-[#c9c8c2]" />
          </div>
        </div>
      </section>

      <div className="pt-[281px]">
        <section>
          <Step number={2}>
            Once the user sets up the search query reflects their hunting assumption, they can save the
            <br />
            query string or add it to the watch list. The user will be notified if new activity meets the
            <br />
            search query
          </Step>
          <div className="mt-[22px] grid grid-cols-[312fr_781fr_208fr_171fr] items-start gap-[42px]">
            <SaveQuery />
            <SavedQueries />
            <Watchlist />
          </div>
        </section>

        <section className="mt-[76px]">
          <Step number={3}>
            The user can also set up the query criteria as a custom detection model and the detected
            <br />
            activity will be regarded as an alert and investigated by the security analysts
          </Step>
          <div className="mt-[22px] grid grid-cols-2 items-start gap-[36px]">
            <ModelList />
            <AddModel />
          </div>
        </section>
      </div>
    </main>
  );
}
